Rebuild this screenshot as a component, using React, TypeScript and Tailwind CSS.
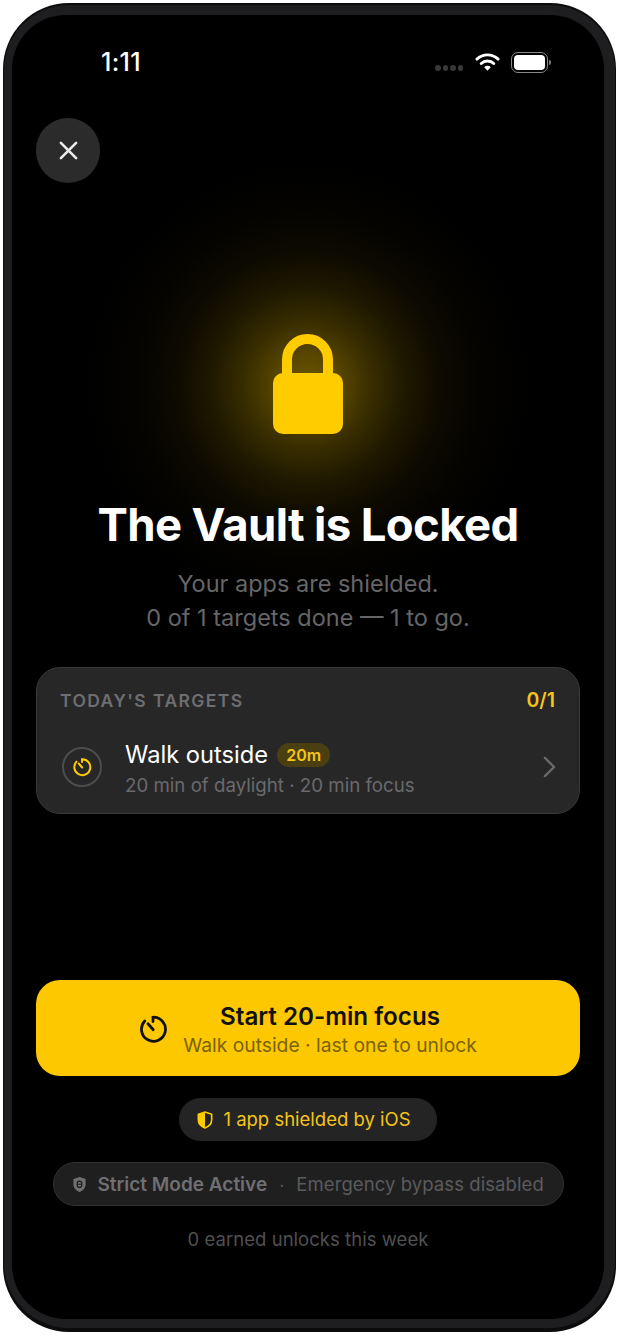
import React from "react";

function Timer({ className, sw = 2.4 }: { className: string; sw?: number }) {
  return (
    <svg viewBox="0 0 24 24" fill="none" stroke="currentColor" strokeWidth={sw} strokeLinecap="round" className={className}>
      <path d="M5.4 5.6A9.6 9.6 0 1 0 12 2.6V6" />
      <path d="M12.2 12.6L8 7.8" />
    </svg>
  );
}

export default function App() {
  return (
    <div className="w-[620px] h-[1336px] bg-white pt-[3px] pl-[3px] pr-[4px] pb-[4px] font-['Inter',sans-serif] overflow-hidden">
      <div className="w-[613px] h-[1329px] rounded-[66px] bg-[#0c0c0d] pt-[2px] px-[1px] pb-[4px]">
        <div className="w-full h-full rounded-[65px] bg-[#1e1e20] pt-[10px] pl-[8px] pr-[11px] pb-[9px]">
          <div className="relative w-full h-full rounded-[54px] bg-black overflow-hidden flex flex-col items-center">
            <div className="absolute left-[66px] top-[140px] w-[460px] h-[460px] rounded-full bg-[radial-gradient(circle_closest-side,rgba(255,204,0,0.42)_0%,rgba(255,204,0,0.34)_14%,rgba(255,204,0,0.22)_28%,rgba(255,204,0,0.12)_42%,rgba(255,204,0,0.05)_58%,rgba(255,204,0,0.015)_76%,rgba(255,204,0,0)_100%)]" />

            {/* status bar */}
            <div className="relative w-full h-[46px] mt-[24px] flex items-center justify-between pl-[89px] pr-[53px] shrink-0">
              <span className="text-[25px] font-medium text-white leading-none tracking-[0.3px]">1:11</span>
              <div className="flex items-center">
                <div className="flex gap-[2px] mt-[12px] mr-[12px]">
                  <span className="w-[5.5px] h-[5.5px] rounded-full bg-[#383838]" />
                  <span className="w-[5.5px] h-[5.5px] rounded-full bg-[#383838]" />
                  <span className="w-[5.5px] h-[5.5px] rounded-full bg-[#383838]" />
                  <span className="w-[5.5px] h-[5.5px] rounded-full bg-[#383838]" />
                </div>
                <svg viewBox="0 0 26 20" className="w-[25px] h-[20px] mr-[11px]" fill="none" stroke="#fff" strokeWidth="3" strokeLinecap="round">
                  <path d="M2 7a16 16 0 0 1 22 0" />
                  <path d="M6.5 11.5a9.5 9.5 0 0 1 13 0" />
                  <path d="M13 19l-3.4-3.6a4.8 4.8 0 0 1 6.8 0z" fill="#fff" stroke="none" />
                </svg>
                <div className="w-[37px] h-[21px] rounded-[7px] border-[1.5px] border-[#8a8a8a] p-[2px]">
                  <div className="w-full h-full rounded-[4px] bg-white" />
                </div>
                <span className="w-[2px] h-[5px] rounded-r-full bg-[#777] ml-[1px]" />
              </div>
            </div>

            {/* close */}
            <div className="relative self-start ml-[24px] mt-[33px] w-[64px] h-[65px] rounded-full bg-[#2b2b2c] flex items-center justify-center shrink-0">
              <svg viewBox="0 0 20 20" className="w-[19px] h-[19px]" fill="none" stroke="#e8e8e8" strokeWidth="2.8" strokeLinecap="round">
                <path d="M2 2l16 16M18 2L2 18" />
              </svg>
            </div>

            {/* lock */}
            <svg viewBox="0 0 70 100" className="relative w-[70px] h-[100px] mt-[151px] shrink-0">
              <path d="M14 42V25.5a20.5 20.5 0 0 1 41 0V42" fill="none" stroke="#ffcc00" strokeWidth="10" />
              <rect x="0" y="39" width="70" height="61" rx="10" fill="#ffcc00" />
            </svg>

            {/* heading */}
            <h1 className="relative mt-[63px] text-[45.5px] leading-[56px] font-bold text-white tracking-[-0.65px] whitespace-nowrap">The Vault is Locked</h1>
            <p className="relative mt-[14px] text-[23.5px] leading-[34px] text-[#666668] text-center whitespace-nowrap">
              Your apps are shielded.
              <br />0 of 1 targets done — 1 to go.
            </p>

            {/* card */}
            <div className="relative mt-[32px] w-[544px] h-[147px] rounded-[24px] bg-[#272728] border border-[#383839] pt-[19px] pl-[23px] pr-[24px] shrink-0">
              <div className="flex justify-between items-center h-[28px]">
                <span className="text-[17.5px] font-semibold tracking-[1.4px] text-[#6e6e70]">TODAY'S TARGETS</span>
                <span className="text-[19.5px] font-semibold text-[#f5c518]">0/1</span>
              </div>
              <div className="flex items-center mt-[22px]">
                <div className="w-[40px] h-[40px] mt-[-2px] ml-[2px] rounded-full border-[2px] border-[#4d4d4e] flex items-center justify-center text-[#ffcc00] shrink-0">
                  <Timer className="w-[20px] h-[20px]" />
                </div>
                <div className="ml-[23px] flex-1">
                  <div className="flex items-center h-[35px]">
                    <span className="text-[23.7px] text-white leading-none">Walk outside</span>
                    <span className="ml-[9px] w-[53px] h-[24px] rounded-full bg-[#4a3f10] text-[#f5c518] text-[16px] font-semibold flex items-center justify-center">20m</span>
                  </div>
                  <div className="text-[18.7px] leading-[26px] text-[#6a6a6c] whitespace-nowrap mt-[1px]">20 min of daylight · 20 min focus</div>
                </div>
                <svg viewBox="0 0 14 24" className="w-[13px] h-[22px] mt-[-2px] mr-[-1px]" fill="none" stroke="#6a6a6c" strokeWidth="2.6" strokeLinecap="round" strokeLinejoin="round">
                  <path d="M2 2l10 10L2 22" />
                </svg>
              </div>
            </div>

            <div className="flex-1" />

            {/* cta */}
            <div className="relative w-[544px] h-[96px] rounded-[24px] bg-[#fdc800] flex items-center shrink-0">
              <Timer className="w-[30px] h-[30px] text-[#111] ml-[102px] mt-[1px]" sw={2.2} />
              <div className="w-[294px] ml-[15px] text-center">
                <div className="text-[24.2px] leading-[37px] font-semibold text-[#111] whitespace-nowrap">Start 20-min focus</div>
                <div className="text-[19.3px] leading-[26px] mt-[-3px] text-[#7a6208] whitespace-nowrap">Walk outside · last one to unlock</div>
              </div>
            </div>

            {/* shield pill */}
            <div className="relative mt-[22px] h-[43px] w-[258px] rounded-full bg-[#242425] flex items-center justify-center gap-[10px] pr-[8px] shrink-0">
              <svg viewBox="0 0 18 20" className="w-[16px] h-[18px]">
                <path d="M9 1l7.5 2.6v6.2c0 4.4-3.2 7.6-7.5 9.2-4.3-1.6-7.5-4.8-7.5-9.2V3.6z" fill="none" stroke="#ffcc00" strokeWidth="1.8" />
                <path d="M9 1L1.5 3.6v6.2c0 4.4 3.2 7.6 7.5 9.2z" fill="#ffcc00" />
              </svg>
              <span className="text-[18.5px] text-[#f5c518] whitespace-nowrap">1 app shielded by iOS</span>
            </div>

            {/* strict pill */}
            <div className="relative mt-[21px] h-[44px] w-[511px] rounded-full bg-[#1f1f20] border border-[#323233] flex items-center pl-[18px] pt-[2px] shrink-0">
              <svg viewBox="0 0 16 18" className="w-[15px] h-[17px] shrink-0 mt-[-2px]">
                <path d="M8 1l6.5 2.2v5.4c0 3.9-2.8 6.8-6.5 8.4-3.7-1.6-6.5-4.5-6.5-8.4V3.2z" fill="#6f6f71" />
                <rect x="5.6" y="5.4" width="4.8" height="6.6" rx="2.3" fill="none" stroke="#1f1f20" strokeWidth="1.4" />
                <path d="M6 8.7h4" stroke="#1f1f20" strokeWidth="1.2" />
              </svg>
              <span className="ml-[11px] text-[19px] font-semibold text-[#6f6f71] whitespace-nowrap">Strict Mode Active</span>
              <span className="ml-[12px] text-[18px] text-[#555557]">·</span>
              <span className="ml-[12px] text-[18.5px] text-[#5b5b5d] whitespace-nowrap tracking-[0.08px]">Emergency bypass disabled</span>
            </div>

            <div className="relative mt-[21px] mb-[68px] text-[18.5px] leading-[24px] text-[#505052] whitespace-nowrap tracking-[0.04px]">0 earned unlocks this week</div>
          </div>
        </div>
      </div>
    </div>
  );
}
